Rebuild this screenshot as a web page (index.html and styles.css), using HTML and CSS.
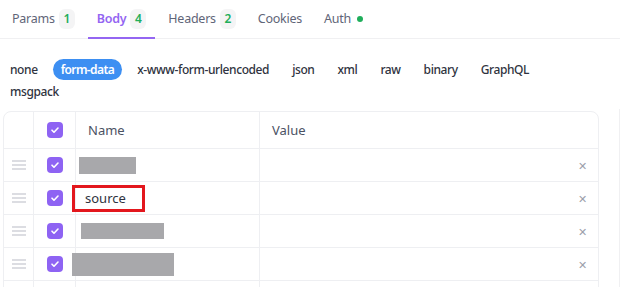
FILE: index.html
```html
<!DOCTYPE html>
<html lang="en">
<head>
    <meta charset="UTF-8">
    <title>Request Body</title>
    <link rel="stylesheet" href="styles.css">
</head>
<body>
    <div class="tabs">
        <div class="tab">Params <span class="badge">1</span></div>
        <div class="tab active">Body <span class="badge">4</span></div>
        <div class="tab">Headers <span class="badge">2</span></div>
        <div class="tab">Cookies</div>
        <div class="tab">Auth <span class="dot"></span></div>
    </div>

    <div class="types">
        <span class="type">none</span>
        <span class="type selected">form-data</span>
        <span class="type">x-www-form-urlencoded</span>
        <span class="type">json</span>
        <span class="type">xml</span>
        <span class="type">raw</span>
        <span class="type">binary</span>
        <span class="type">GraphQL</span>
        <span class="type">msgpack</span>
    </div>

    <div class="panel">
        <div class="table">
            <div class="row head">
                <div class="cell"></div>
                <div class="cell center"><span class="check"><svg viewBox="0 0 16 16"><path d="M5 8.2l2 2 4-4.2"/></svg></span></div>
                <div class="cell name">Name</div>
                <div class="cell name">Value</div>
            </div>
            <div class="row">
                <div class="cell center"><span class="handle"></span></div>
                <div class="cell center"><span class="check"><svg viewBox="0 0 16 16"><path d="M5 8.2l2 2 4-4.2"/></svg></span></div>
                <div class="cell"><span class="redact r1"></span></div>
                <div class="cell value"><span class="remove">&#x2715;</span></div>
            </div>
            <div class="row">
                <div class="cell center"><span class="handle"></span></div>
                <div class="cell center"><span class="check"><svg viewBox="0 0 16 16"><path d="M5 8.2l2 2 4-4.2"/></svg></span></div>
                <div class="cell"><span class="marked">source</span></div>
                <div class="cell value"><span class="remove">&#x2715;</span></div>
            </div>
            <div class="row">
                <div class="cell center"><span class="handle"></span></div>
                <div class="cell center"><span class="check"><svg viewBox="0 0 16 16"><path d="M5 8.2l2 2 4-4.2"/></svg></span></div>
                <div class="cell"><span class="redact r3"></span></div>
                <div class="cell value"><span class="remove">&#x2715;</span></div>
            </div>
            <div class="row">
                <div class="cell center"><span class="handle"></span></div>
                <div class="cell center"><span class="check"><svg viewBox="0 0 16 16"><path d="M5 8.2l2 2 4-4.2"/></svg></span></div>
                <div class="cell"><span class="redact r4"></span></div>
                <div class="cell value"><span class="remove">&#x2715;</span></div>
            </div>
            <div class="row">
                <div class="cell"></div>
                <div class="cell"></div>
                <div class="cell"></div>
                <div class="cell"></div>
            </div>
        </div>
    </div>
</body>
</html>
```

FILE: styles.css
```css
body {
    margin: 0;
    font-family: "Noto Sans", "Open Sans", sans-serif;
    background: #fff;
    color: #333;
    overflow: hidden;
}
.tabs {
    display: flex;
    gap: 4px;
    height: 38px;
    padding-left: 3px;
    border-bottom: 1px solid #f0f0f2;
}
.tab {
    display: flex;
    align-items: center;
    padding: 0 9px;
    font-size: 12.5px;
    letter-spacing: -0.25px;
    color: #5f6578;
    border-bottom: 2px solid transparent;
    margin-bottom: -1px;
}
.tab.active {
    color: #9466f2;
    font-weight: 600;
    border-bottom-color: #9466f2;
}
.badge {
    display: inline-flex;
    align-items: center;
    justify-content: center;
    width: 16px;
    height: 20px;
    margin-left: 4px;
    border-radius: 6px;
    background: #f4f4f5;
    color: #1fae5b;
    font-size: 12px;
    font-weight: 600;
}
.dot {
    width: 6px;
    height: 6px;
    margin-left: 6px;
    border-radius: 50%;
    background: #1fae5b;
}
.types {
    display: flex;
    flex-wrap: wrap;
    column-gap: 7px;
    row-gap: 1px;
    width: 540px;
    padding: 20px 0 0 2px;
}
.type {
    display: flex;
    align-items: center;
    height: 21px;
    padding: 0 8px;
    font-size: 12px;
    letter-spacing: -0.4px;
    font-weight: 500;
    color: #2f3340;
    border-radius: 11px;
}
.type.selected {
    background: #3d8ff2;
    color: #fff;
    font-weight: 600;
    letter-spacing: -0.6px;
}
.panel {
    margin-top: 7px;
    padding: 2px 0 0 3px;
    border-right: 1px solid #f0f0f2;
    height: 200px;
}
.table {
    width: 594px;
    border: 1px solid #eeeff2;
    border-radius: 8px;
}
.row {
    display: grid;
    grid-template-columns: 30px 42px 184px 1fr;
    box-sizing: border-box;
    height: 33px;
    border-bottom: 1px solid #eeeff2;
}
.row.head {
    height: 37px;
}
.cell {
    display: flex;
    align-items: center;
    border-right: 1px solid #eeeff2;
}
.cell:last-child {
    border-right: none;
}
.center {
    justify-content: center;
}
.name {
    padding-left: 12px;
    font-size: 13px;
    color: #4b5263;
}
.value {
    justify-content: flex-end;
    padding-right: 11px;
}
.check {
    display: flex;
    width: 16px;
    height: 16px;
    border-radius: 4px;
    background: #8e63f3;
}
.check svg {
    width: 16px;
    height: 16px;
    fill: none;
    stroke: #fff;
    stroke-width: 1.6;
    stroke-linecap: round;
    stroke-linejoin: round;
}
.handle {
    width: 14px;
    height: 2px;
    background: #dcdde2;
    box-shadow: 0 -4px 0 #dcdde2, 0 4px 0 #dcdde2;
}
.remove {
    font-size: 11px;
    color: #9ba0ab;
}
.redact {
    display: block;
    background: #a8a8ab;
}
.r1 {
    width: 57px;
    height: 17px;
    margin-left: 3px;
}
.r3 {
    width: 83px;
    height: 16px;
    margin-left: 5px;
}
.r4 {
    width: 102px;
    height: 23px;
    margin-left: -4px;
}
.marked {
    display: flex;
    align-items: center;
    box-sizing: border-box;
    width: 73px;
    height: 27px;
    margin-left: -4px;
    padding-left: 10px;
    border: 3px solid #e3171d;
    font-size: 13px;
    color: #2f3340;
}
```
